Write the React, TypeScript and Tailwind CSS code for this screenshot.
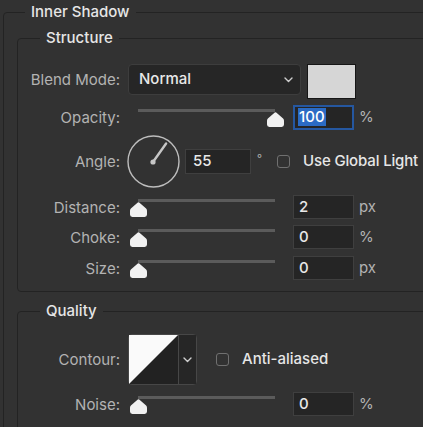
import React from 'react';

const font = { fontFamily: 'Inter, "Noto Sans", sans-serif' };

const labelCls = 'w-[102px] shrink-0 text-right text-[15px] leading-none text-[#b3b3b3]';

function Thumb({ pos }: { pos: number }) {
  // track spans 137px starting 10px into the slider area
  const left = 10 + pos * 137 - 8.5;
  return (
    <svg className="absolute top-[7px]" style={{ left }} width="17" height="15" viewBox="0 0 17 15">
      <path
        d="M7.2 0.9 Q8.5 -0.2 9.8 0.9 L16.1 6.6 Q17 7.4 17 8.7 V12.6 Q17 15 14.6 15 H2.4 Q0 15 0 12.6 V8.7 Q0 7.4 0.9 6.6 Z"
        fill="#f1f1f1"
      />
    </svg>
  );
}

function SliderRow({
  label,
  value,
  unit,
  pos,
  className,
}: {
  label: string;
  value: string;
  unit: string;
  pos: number;
  className?: string;
}) {
  return (
    <div className={`flex h-[24px] items-center ${className ?? ''}`}>
      <span className={labelCls}>{label}</span>
      <div className="relative ml-[8px] h-[24px] w-[165px] shrink-0">
        <div className="absolute left-[10px] top-[4px] h-[3px] w-[137px] bg-[#5b5b5b]" />
        <Thumb pos={pos} />
      </div>
      <div className="flex h-[24px] w-[61px] items-center border border-[#3f3f3f] bg-[#252525] pl-[5px] text-[15px] font-medium text-[#e8e8e8]">
        {value}
      </div>
      <span className="ml-[5px] text-[15px] text-[#b3b3b3]">{unit}</span>
    </div>
  );
}

function Chevron({ className }: { className?: string }) {
  return (
    <svg className={className} width="9" height="6" viewBox="0 0 9 6">
      <polyline points="1,1 4.5,4.5 8,1" fill="none" stroke="#cfcfcf" strokeWidth="1.4" strokeLinecap="round" strokeLinejoin="round" />
    </svg>
  );
}

function Checkbox() {
  return <div className="h-[13px] w-[13px] shrink-0 rounded-[3px] border border-[#707070]" />;
}

function AngleDial({ angle }: { angle: number }) {
  const r = (angle * Math.PI) / 180;
  const x2 = 26.5 + Math.cos(r) * 22;
  const y2 = 26.5 - Math.sin(r) * 22;
  return (
    <svg width="53" height="53" viewBox="0 0 53 53" className="shrink-0">
      <circle cx="26.5" cy="26.5" r="25.5" fill="none" stroke="#bdbdbd" strokeWidth="1.4" />
      <line x1="26" y1="27" x2={x2} y2={y2} stroke="#c6c6c6" strokeWidth="2.4" strokeLinecap="round" />
      <circle cx="26" cy="27" r="2.6" fill="#c6c6c6" />
    </svg>
  );
}

export default function App() {
  return (
    <div className="h-[427px] w-[423px] overflow-hidden bg-[#323232] pt-[1px]" style={font}>
      <fieldset className="ml-[3px] w-[450px] rounded-[4px] border border-[#232323]">
        <legend className="ml-[21px] px-[6px] text-[15px] leading-[22px] font-medium text-[#e6e6e6]">Inner Shadow</legend>

        {/* Structure */}
        <fieldset className="ml-[13px] mt-[4px] w-[430px] rounded-[4px] border border-[#232323] pb-[11px]">
          <legend className="ml-[22px] px-[6px] text-[15px] leading-[22px] font-medium text-[#e6e6e6]">Structure</legend>

          <div className="mt-[15px] flex h-[35px] items-start">
            <div className="flex h-[31px] items-center">
              <span className={labelCls}>Blend Mode:</span>
            </div>
            <div className="ml-[8px] flex h-[31px] w-[173px] items-center justify-between rounded-[4px] border border-[#3d3d3d] bg-[#262626] pl-[10px] pr-[7px]">
              <span className="text-[15px] font-medium text-[#e8e8e8]">Normal</span>
              <Chevron />
            </div>
            <div className="ml-[6px] h-[35px] w-[49px] border border-[#161616] bg-[#d6d6d6]" />
          </div>

          <div className="mt-[6px] flex h-[24px] items-center">
            <span className={labelCls}>Opacity:</span>
            <div className="relative ml-[8px] h-[24px] w-[165px] shrink-0">
              <div className="absolute left-[10px] top-[4px] h-[3px] w-[137px] bg-[#5b5b5b]" />
              <Thumb pos={1} />
            </div>
            <div className="flex h-[25px] w-[61px] items-center border-2 border-[#2557a0] bg-[#252525] pl-[3px]">
              <span className="bg-[#2b6bc4] px-[1px] text-[15px] leading-[18px] font-medium text-white">100</span>
            </div>
            <span className="ml-[5px] text-[15px] text-[#b3b3b3]">%</span>
          </div>

          <div className="mt-[6px] flex h-[53px] items-center">
            <span className={labelCls}>Angle:</span>
            <div className="ml-[7px]">
              <AngleDial angle={55} />
            </div>
            <div className="ml-[5px] flex h-[25px] w-[66px] items-center border border-[#3f3f3f] bg-[#252525] pl-[7px] text-[15px] font-medium text-[#e8e8e8]">
              55
            </div>
            <span className="ml-[6px] mb-[6px] text-[11px] text-[#b3b3b3]">°</span>
            <div className="ml-[15px]">
              <Checkbox />
            </div>
            <span className="ml-[13px] text-[15px] font-medium tracking-[-0.01em] text-[#e6e6e6]">Use Global Light</span>
          </div>

          <SliderRow className="mt-[7px]" label="Distance:" value="2" unit="px" pos={0} />
          <SliderRow className="mt-[6px]" label="Choke:" value="0" unit="%" pos={0} />
          <SliderRow className="mt-[7px]" label="Size:" value="0" unit="px" pos={0} />
        </fieldset>

        {/* Quality */}
        <fieldset className="ml-[13px] mt-[8px] w-[430px] rounded-[4px] border border-[#232323] pb-[20px]">
          <legend className="ml-[22px] px-[6px] text-[15px] leading-[22px] font-medium text-[#e6e6e6]">Quality</legend>

          <div className="mt-[12px] flex h-[51px] items-center">
            <span className={labelCls}>Contour:</span>
            <div className="ml-[8px] flex h-[51px] rounded-[4px] border border-[#474747]">
              <svg width="49" height="49" viewBox="0 0 49 49" className="block">
                <rect width="49" height="49" fill="#222" />
                <polygon points="0,0 49,0 0,49" fill="#fafafa" />
              </svg>
              <div className="flex w-[18px] items-center justify-center border-l border-[#474747] bg-[#262626]">
                <Chevron />
              </div>
            </div>
            <div className="ml-[19px]">
              <Checkbox />
            </div>
            <span className="ml-[13px] text-[15px] font-medium text-[#e6e6e6]">Anti-aliased</span>
          </div>

          <SliderRow className="mt-[7px]" label="Noise:" value="0" unit="%" pos={0} />
        </fieldset>
      </fieldset>
    </div>
  );
}
